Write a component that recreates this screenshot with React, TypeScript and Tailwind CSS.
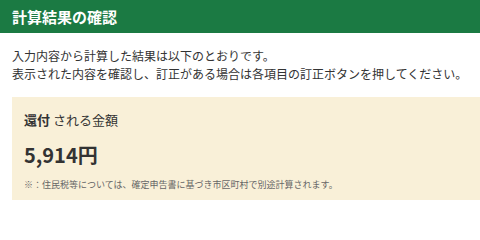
export default function App() {
  return (
    <div className="w-[480px] h-[200px] overflow-hidden bg-white font-['Noto_Sans_CJK_JP',sans-serif] text-[#333]">
      <div className="flex h-[33px] items-center bg-[#1b7a43] px-3">
        <h1 className="text-[15px] font-bold leading-none text-white">計算結果の確認</h1>
      </div>
      <div className="mt-[14px] px-3 text-[12px] leading-[18px]">
        <p>入力内容から計算した結果は以下のとおりです。</p>
        <p>表示された内容を確認し、訂正がある場合は各項目の訂正ボタンを押してください。</p>
      </div>
      <div className="ml-3 mt-[14px] bg-[#f9f0d8] px-3 pt-[13px] pb-6">
        <p className="text-[13px] leading-[20px]">
          <span className="font-bold">還付</span> される金額
        </p>
        <p className="mt-[11px] text-[20px] font-bold leading-[28px]">5,914円</p>
        <p className="mt-[9px] text-[9px] leading-[14px] text-[#666]">
          ※：住民税等については、確定申告書に基づき市区町村で別途計算されます。
        </p>
      </div>
    </div>
  );
}
